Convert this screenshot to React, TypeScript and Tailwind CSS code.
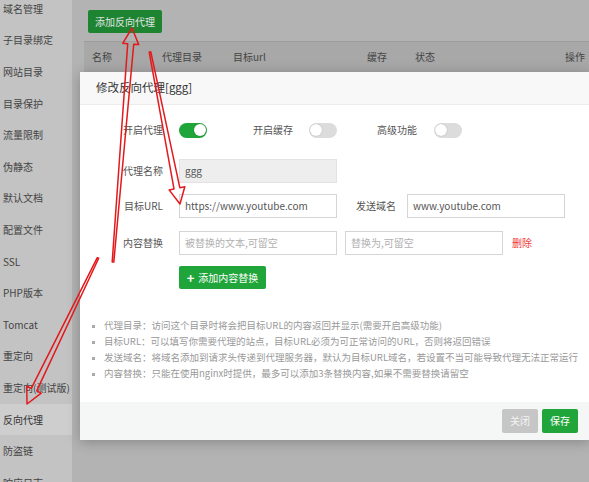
import React from "react";

const MENU = [
  "域名管理",
  "子目录绑定",
  "网站目录",
  "目录保护",
  "流量限制",
  "伪静态",
  "默认文档",
  "配置文件",
  "SSL",
  "PHP版本",
  "Tomcat",
  "重定向",
  "重定向(测试版)",
  "反向代理",
  "防盗链",
  "响应日志",
];

const TIPS = [
  "代理目录：访问这个目录时将会把目标URL的内容返回并显示(需要开启高级功能)",
  "目标URL：可以填写你需要代理的站点，目标URL必须为可正常访问的URL，否则将返回错误",
  "发送域名：将域名添加到请求头传递到代理服务器，默认为目标URL域名，若设置不当可能导致代理无法正常运行",
  "内容替换：只能在使用nginx时提供，最多可以添加3条替换内容,如果不需要替换请留空",
];

/**
 * Tapered hollow arrow, like the ones a screenshot tool draws
 */
function arrowPoints(x1: number, y1: number, x2: number, y2: number) {
  const dx = x2 - x1;
  const dy = y2 - y1;
  const len = Math.hypot(dx, dy);
  const ux = dx / len;
  const uy = dy / len;
  const nx = -uy;
  const ny = ux;
  const head = 16;
  const bx = x2 - ux * head;
  const by = y2 - uy * head;
  const pts: Array<[number, number]> = [
    [x1 + nx * 0.8, y1 + ny * 0.8],
    [bx + nx * 3, by + ny * 3],
    [bx + nx * 8, by + ny * 8],
    [x2, y2],
    [bx - nx * 8, by - ny * 8],
    [bx - nx * 3, by - ny * 3],
    [x1 - nx * 0.8, y1 - ny * 0.8],
  ];
  return pts.map(([x, y]) => `${x.toFixed(1)},${y.toFixed(1)}`).join(" ");
}

function Toggle({ on }: { on?: boolean }) {
  return (
    <div
      className={
        on
          ? "w-[28px] h-[15px] rounded-full bg-[#20a53a] flex items-center justify-end px-[1.5px]"
          : "w-[28px] h-[15px] rounded-full bg-[#dcdcdc] flex items-center justify-start px-[1px]"
      }
    >
      <div className="w-[12px] h-[12px] rounded-full bg-white shadow-[0_0_1px_rgba(0,0,0,0.35)]" />
    </div>
  );
}

function Label({ children }: { children: React.ReactNode }) {
  return <div className="w-[83px] shrink-0 text-right text-[10px] text-[#555]">{children}</div>;
}

function Field({ value, placeholder, disabled }: { value?: string; placeholder?: string; disabled?: boolean }) {
  return (
    <div
      className={
        disabled
          ? "w-[158px] h-[24px] shrink-0 border border-[#e3e3e3] bg-[#eeeeee] flex items-center px-[5px] text-[10px] text-[#555]"
          : "w-[158px] h-[24px] shrink-0 border border-[#d5d5d5] bg-white flex items-center px-[5px] text-[10px] text-[#555]"
      }
    >
      {value ? value : <span className="text-[#b0b0b0]">{placeholder}</span>}
    </div>
  );
}

function ProxyModal() {
  return (
    <div className="absolute left-[80px] top-[72px] w-[510px] h-[368px] bg-white flex flex-col shadow-[0_2px_12px_rgba(0,0,0,0.25)]">
      <div className="h-[33px] shrink-0 bg-[#f8f8f8] border-b border-[#ececec] flex items-center pl-[16px] text-[11.5px] text-[#333]">
        修改反向代理[ggg]
      </div>

      <div className="flex-1 pt-[17px]">
        <div className="h-[16px] flex items-center">
          <Label>开启代理</Label>
          <div className="ml-[16px]">
            <Toggle on />
          </div>
          <div className="ml-[46px] text-[10px] text-[#555]">开启缓存</div>
          <div className="ml-[16px]">
            <Toggle />
          </div>
          <div className="ml-[40px] text-[10px] text-[#555]">高级功能</div>
          <div className="ml-[17px]">
            <Toggle />
          </div>
        </div>

        <div className="mt-[21px] flex items-center">
          <Label>代理名称</Label>
          <div className="ml-[16px]">
            <Field value="ggg" disabled />
          </div>
        </div>

        <div className="mt-[11px] flex items-center">
          <Label>目标URL</Label>
          <div className="ml-[16px]">
            <Field value="https://www.youtube.com" />
          </div>
          <div className="ml-[19px] w-[40px] text-[10px] text-[#555]">发送域名</div>
          <div className="ml-[11px]">
            <Field value="www.youtube.com" />
          </div>
        </div>

        <div className="mt-[13px] flex items-center">
          <Label>内容替换</Label>
          <div className="ml-[16px]">
            <Field placeholder="被替换的文本,可留空" />
          </div>
          <div className="ml-[8px]">
            <Field placeholder="替换为,可留空" />
          </div>
          <div className="ml-[9px] text-[10px] text-[#ef3a3a]">删除</div>
        </div>

        <div className="mt-[11px] pl-[99px]">
          <button className="h-[23px] w-[87px] bg-[#20a53a] rounded-[2px] text-white text-[10px] flex items-center justify-center gap-[4px]">
            <span className="text-[13px] font-bold leading-none">+</span>
            添加内容替换
          </button>
        </div>

        <ul className="mt-[29px] pl-[12px] flex flex-col">
          {TIPS.map((t) => (
            <li key={t} className="h-[16px] flex items-center text-[9.5px] text-[#999] whitespace-nowrap">
              <span className="w-[3px] h-[3px] bg-[#aaa] mr-[9px] shrink-0" />
              {t}
            </li>
          ))}
        </ul>
      </div>

      <div className="h-[38px] shrink-0 bg-[#f5f6f6] flex items-center justify-end pr-[12px] gap-[4px]">
        <button className="w-[36px] h-[24px] bg-[#c6c6c6] rounded-[2px] text-[10px] text-[#f4f4f4]">关闭</button>
        <button className="w-[36px] h-[24px] bg-[#20a53a] rounded-[2px] text-[10px] text-white">保存</button>
      </div>

      {/* layer close button, mostly outside the window */}
      <div className="absolute -right-[26px] -top-[9px] w-[22px] h-[22px] rounded-full bg-[#5f5f5f] border border-[#777]" />
    </div>
  );
}

export default function App() {
  return (
    <div className="relative w-[589px] h-[482px] overflow-hidden flex bg-[#b3b3b3] font-['Noto_Sans_CJK_SC',sans-serif] leading-none">
      {/* Sidebar */}
      <div className="w-[72px] shrink-0 bg-[#c3c3c3] flex flex-col -mt-[7px]">
        {MENU.map((m) => (
          <div
            key={m}
            className={
              m === "反向代理"
                ? "h-[31.6px] shrink-0 flex items-center pl-[3px] text-[10px] text-[#333] bg-[#cecece]"
                : "h-[31.6px] shrink-0 flex items-center pl-[3px] text-[10px] text-[#444]"
            }
          >
            {m}
          </div>
        ))}
      </div>

      {/* Main content (dimmed under the layer) */}
      <div className="flex-1 flex flex-col">
        <div className="pt-[10px] pl-[16px]">
          <button className="w-[74px] h-[23px] bg-[#1d8532] rounded-[2px] text-[10px] text-[#e4e4e4]">添加反向代理</button>
        </div>
        <div className="mt-[8px] ml-[12px] h-[31px] border-t border-[#9c9c9c] bg-[#a8a8a8] flex items-center text-[10px] text-[#444]">
          <div className="w-[78px] pl-[8px]">名称</div>
          <div className="w-[71px]">代理目录</div>
          <div className="w-[134px]">目标url</div>
          <div className="w-[48px]">缓存</div>
          <div className="w-[150px]">状态</div>
          <div>操作</div>
        </div>
      </div>

      <ProxyModal />

      {/* Red annotation arrows */}
      <svg className="absolute inset-0 pointer-events-none" width="589" height="482" viewBox="0 0 589 482">
        <g fill="none" stroke="#e3191c" strokeWidth="1.5" strokeLinejoin="round">
          <polygon points={arrowPoints(113, 262, 132, 28)} />
          <polygon points={arrowPoints(150, 52, 180, 204)} />
          <polygon points={arrowPoints(98, 258, 27, 404)} />
        </g>
      </svg>
    </div>
  );
}
